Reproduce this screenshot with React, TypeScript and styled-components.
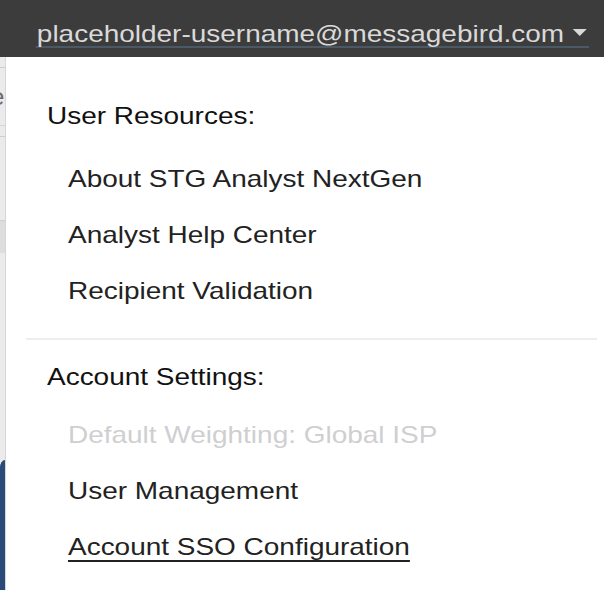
import React from "react";
import styled, { createGlobalStyle } from "styled-components";

const Global = createGlobalStyle`
  html, body { margin: 0; padding: 0; background: #ffffff; }
  body { font-family: "Liberation Sans", Arial, Helvetica, sans-serif; overflow: hidden; }
  * { box-sizing: border-box; }
`;

const STRETCH = 1.165;

const Page = styled.div`
  width: 604px;
  height: 590px;
  display: flex;
  flex-direction: column;
  overflow: hidden;
`;

const TopBar = styled.header`
  height: 57px;
  flex: none;
  background: #3c3c3c;
  display: flex;
  justify-content: flex-end;
  align-items: flex-start;
  padding: 22px 15px 0 0;
`;

const UserButton = styled.button`
  display: flex;
  align-items: center;
  gap: 7px;
  background: none;
  border: none;
  border-bottom: 2px solid #4b5865;
  padding: 0 2px 0 1px;
  margin: 0;
  font-family: inherit;
  font-size: 24px;
  line-height: 24px;
  color: #d9d9d9;
  cursor: pointer;
  transform: scaleX(${STRETCH});
  transform-origin: right center;
`;

const Caret = styled.span`
  width: 0;
  height: 0;
  border-left: 6px solid transparent;
  border-right: 6px solid transparent;
  border-top: 7px solid #d9d9d9;
  margin-top: -4px;
`;

const Body = styled.div`
  flex: 1;
  display: flex;
  min-height: 0;
`;

const BackStrip = styled.div`
  width: 6px;
  flex: none;
  display: flex;
  flex-direction: column;
  background: #ebebeb;
  border-right: 1px solid #d6d6d6;
  overflow: hidden;
`;

const StripBlock = styled.div<{ $h: number; $bg?: string; $line?: boolean }>`
  height: ${(p) => p.$h}px;
  flex: none;
  background: ${(p) => p.$bg || "transparent"};
  border-bottom: ${(p) => (p.$line ? "1px solid #cfcfcf" : "none")};
`;

const StripGlyph = styled.div`
  height: 58px;
  flex: none;
  display: flex;
  align-items: center;
  font-size: 24px;
  color: #6a6a6a;
  overflow: hidden;
  border-bottom: 1px solid #d6d6d6;
  span { margin-left: -9px; }
`;

const StripBlue = styled.div`
  flex: 1;
  background: #2a4a79;
  border-top-left-radius: 12px 18px;
`;

const Menu = styled.nav`
  flex: 1;
  background: #ffffff;
  padding-top: 31px;
  display: flex;
  flex-direction: column;
`;

const Section = styled.section<{ $gap: number; $top?: number }>`
  display: flex;
  flex-direction: column;
  margin-top: ${(p) => p.$top || 0}px;
  ul {
    list-style: none;
    margin: ${(p) => p.$gap}px 0 0;
    padding: 0;
  }
`;

const Label = styled.span<{ $underline?: boolean }>`
  display: inline-block;
  white-space: nowrap;
  transform: scaleX(${STRETCH});
  transform-origin: left center;
  text-decoration: ${(p) => (p.$underline ? "underline" : "none")};
  text-underline-offset: 5px;
  text-decoration-thickness: 1.5px;
`;

const Heading = styled.h3`
  margin: 0;
  padding-left: 41px;
  font-size: 24px;
  font-weight: normal;
  line-height: 56px;
  color: #111111;
`;

const Item = styled.li<{ $disabled?: boolean }>`
  padding-left: 62px;
  font-size: 24px;
  line-height: 56px;
  color: ${(p) => (p.$disabled ? "#cfcfd1" : "#222222")};
`;

const Divider = styled.hr`
  margin: 19px 7px 0 20px;
  border: none;
  height: 2px;
  background: #eeeeee;
`;

export default function App() {
  return (
    <Page>
      <Global />
      <TopBar>
        <UserButton>
          placeholder-username@messagebird.com
          <Caret />
        </UserButton>
      </TopBar>
      <Body>
        <BackStrip>
          <StripBlock $h={11} $line />
          <StripGlyph>
            <span>e</span>
          </StripGlyph>
          <StripBlock $h={11} $line />
          <StripBlock $h={84} $line />
          <StripBlock $h={32} $bg="#dddddd" />
          <StripBlock $h={207} />
          <StripBlue />
        </BackStrip>
        <Menu>
          <Section $gap={7}>
            <Heading>
              <Label>User Resources:</Label>
            </Heading>
            <ul>
              <Item>
                <Label>About STG Analyst NextGen</Label>
              </Item>
              <Item>
                <Label>Analyst Help Center</Label>
              </Item>
              <Item>
                <Label>Recipient Validation</Label>
              </Item>
            </ul>
          </Section>
          <Divider />
          <Section $gap={2} $top={9}>
            <Heading>
              <Label>Account Settings:</Label>
            </Heading>
            <ul>
              <Item $disabled>
                <Label>Default Weighting: Global ISP</Label>
              </Item>
              <Item>
                <Label>User Management</Label>
              </Item>
              <Item>
                <Label $underline>Account SSO Configuration</Label>
              </Item>
            </ul>
          </Section>
        </Menu>
      </Body>
    </Page>
  );
}
